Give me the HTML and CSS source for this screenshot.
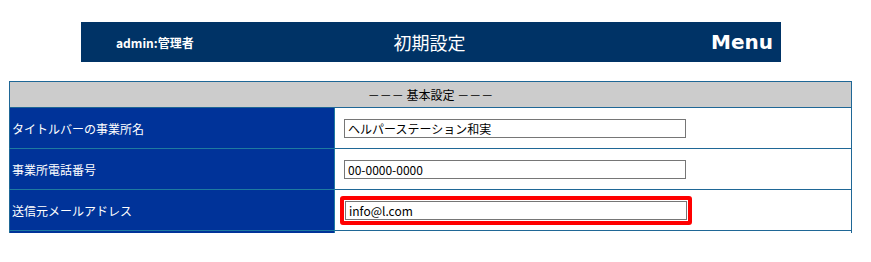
FILE: index.html
```html
<!DOCTYPE html>
<html lang="ja">

<head>
  <meta charset="UTF-8">
  <meta name="viewport" content="width=device-width, initial-scale=1.0">
  <title>初期設定</title>

  <link rel="stylesheet" href="styles.css">
</head>

<body>
  <!-- Top bar with the user name, the page title and the menu link -->
  <div class="topbar">
    <span class="user">admin:管理者</span>
    <span class="page-title">初期設定</span>
    <a class="menu" href="#">Menu</a>
  </div>

  <!-- Settings table -->
  <div class="table-wrap">
    <table class="settings">
      <tr>
        <th colspan="2">－－－ 基本設定 －－－</th>
      </tr>
      <tr>
        <td class="label">タイトルバーの事業所名</td>
        <td class="field"><input type="text" value="ヘルパーステーション和実"></td>
      </tr>
      <tr>
        <td class="label">事業所電話番号</td>
        <td class="field"><input type="text" value="00-0000-0000"></td>
      </tr>
      <tr>
        <td class="label">送信元メールアドレス</td>
        <td class="field">
          <span class="highlight"><input type="text" value="info@l.com"></span>
        </td>
      </tr>
      <tr>
        <td class="label">&nbsp;</td>
        <td class="field">&nbsp;</td>
      </tr>
    </table>
  </div>
</body>

</html>
```

FILE: styles.css
```css
/* Default margins removed, a Japanese capable font is chosen. */
body {
  margin: 0;
  padding: 0;
  background: #ffffff;
  font-family: "Noto Sans CJK JP", "DejaVu Sans", sans-serif;
  font-size: 12px;
}

/* The navy bar at the top of the page. */
.topbar {
  display: grid;
  grid-template-columns: 1fr auto 1fr;
  align-items: center;
  width: 700px;
  height: 40px;
  margin: 22px 0 0 81px;
  padding: 0 8px;
  box-sizing: border-box;
  background-color: #003366;
  color: #ffffff;
}

.user {
  margin-left: 27px;
  font-weight: bold;
  font-size: 12px;
}

.page-title {
  margin-right: 3px;
  font-size: 18px;
}

.menu {
  justify-self: end;
  color: #ffffff;
  text-decoration: none;
  font-family: "DejaVu Sans", sans-serif;
  font-weight: bold;
  font-size: 20px;
}

/* The table is cut at the bottom, as in the page. */
.table-wrap {
  margin: 19px 0 0 9px;
  height: 152px;
  overflow: hidden;
}

.settings {
  width: 843px;
  border-collapse: collapse;
}

.settings th,
.settings td {
  border: 1px solid #1f6796;
  padding: 0;
}

.settings th {
  height: 25px;
  background-color: #cccccc;
  font-weight: normal;
  font-size: 12px;
  color: #000000;
}

.settings td {
  height: 40px;
}

.label {
  width: 322px;
  padding-left: 2px !important;
  background-color: #003399;
  color: #ffffff;
  border-color: #1f6796 #1e7aa0 #1e7aa0 #1f6796 !important;
}

.field {
  padding-left: 9px !important;
  background-color: #ffffff;
}

/* Text inputs of the form */
.field input {
  display: block;
  width: 342px;
  height: 19px;
  box-sizing: border-box;
  margin: 0;
  padding: 0 3px;
  border: 1px solid #767676;
  font-family: "Noto Sans CJK JP", "DejaVu Sans", sans-serif;
  font-size: 12px;
  color: #000000;
}

/* Red frame around the mail address field. */
.highlight {
  display: inline-block;
  margin-left: -4px;
  padding: 1px;
  border: 4px solid #ff0000;
  border-radius: 3px;
}
```
